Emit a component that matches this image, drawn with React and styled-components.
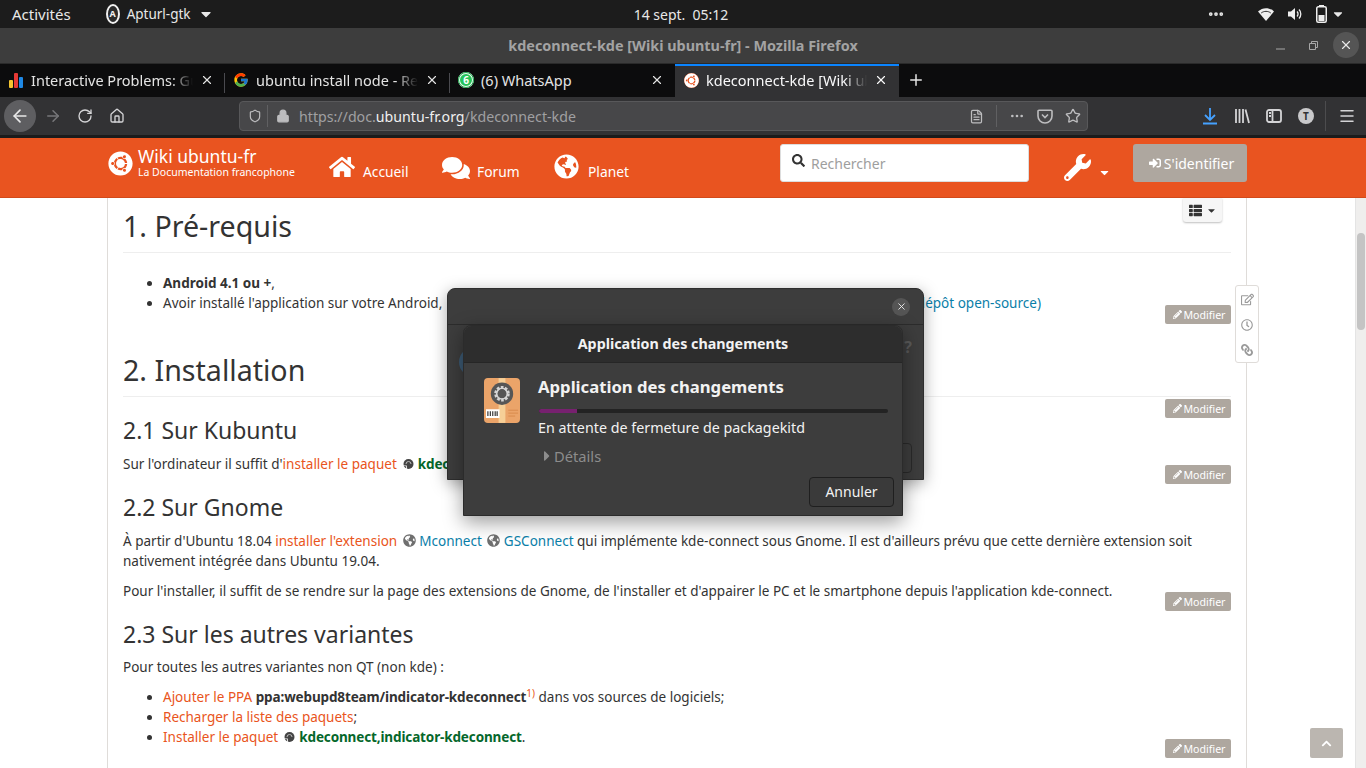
import React from "react";
import styled, { createGlobalStyle } from "styled-components";
import {
  FaHome, FaComments, FaGlobeAmericas, FaWrench, FaPencilAlt, FaSignInAlt, FaSearch,
  FaThList, FaRegEdit, FaRegClock, FaLink, FaChevronUp, FaUbuntu, FaCaretDown, FaCaretRight,
} from "react-icons/fa";
import { FcGoogle } from "react-icons/fc";
import {
  ArrowLeft, ArrowRight, RotateCw, Home, Lock, Shield, X, Plus, Star, Ellipsis,
  Menu, FileText,
} from "lucide-react";

const UI = `"Noto Sans", "Open Sans", sans-serif`;

const Global = createGlobalStyle`
  html, body { margin: 0; padding: 0; width: 1366px; height: 768px; overflow: hidden; background: #fff; }
  * { box-sizing: border-box; }
  body { font-family: ${UI}; }
`;

const Screen = styled.div`
  position: relative;
  width: 1366px;
  height: 768px;
  overflow: hidden;
  display: flex;
  flex-direction: column;
`;

/* ---------- GNOME top bar ---------- */
const TopBar = styled.div`
  height: 28px;
  flex: none;
  background: #1c1c1c;
  color: #e8e8e8;
  font-size: 13.5px;
  display: grid;
  grid-template-columns: 1fr auto 1fr;
  align-items: center;
  padding: 0 21px 0 12px;
`;
const TopLeft = styled.div`
  display: flex;
  align-items: center;
`;
const Activities = styled.span`
  font-size: 15px;
`;
const AppBadge = styled.span`
  width: 14px;
  height: 20px;
  margin-left: 35px;
  border-radius: 50%;
  background: #2a2a2a;
  border: 2px solid #f0f0f0;
  color: #f0f0f0;
  font-size: 9px;
  font-weight: 700;
  line-height: 16px;
  text-align: center;
  display: inline-block;
`;
const AppName = styled.span`
  margin-left: 7px;
`;
const TopRight = styled.div`
  display: flex;
  align-items: center;
  justify-content: flex-end;
  gap: 13px;
`;
const Clock = styled.div`
  white-space: pre;
  font-size: 14px;
  padding-left: 5px;
`;

/* ---------- window title ---------- */
const TitleBar = styled.div`
  height: 36px;
  flex: none;
  background: #3d3d3d;
  border-bottom: 1px solid #2a2a2a;
  position: relative;
  display: flex;
  align-items: center;
  justify-content: center;
  color: #a3a3a3;
  font-size: 14.4px;
  font-weight: 700;
`;
const WinControls = styled.div`
  position: absolute;
  right: 7px;
  top: 4px;
  display: flex;
  align-items: center;
  gap: 15px;
`;
const WinBtn = styled.span`
  width: 18px;
  height: 26px;
  display: flex;
  align-items: center;
  justify-content: center;
  color: #a8a8a8;
`;
const WinClose = styled.span`
  width: 26px;
  height: 26px;
  margin-left: -4px;
  border-radius: 50%;
  background: #555;
  color: #e8e8e8;
  display: flex;
  align-items: center;
  justify-content: center;
`;

/* ---------- tabs ---------- */
const TabStrip = styled.div`
  height: 33px;
  flex: none;
  background: #0c0c0d;
  display: flex;
  align-items: stretch;
`;
const Tab = styled.div`
  width: ${(p) => p.$w || 225}px;
  position: relative;
  display: flex;
  align-items: center;
  padding: 0 11px 3px 8px;
  gap: 7px;
  color: ${(p) => (p.$active ? "#f9f9fa" : "#e4e4e4")};
  background: ${(p) => (p.$active ? "#323234" : "transparent")};
  border-top: 2px solid ${(p) => (p.$active ? "#0a84ff" : "transparent")};
  font-size: 14.5px;
  &::after {
    content: "";
    display: ${(p) => (p.$sep ? "block" : "none")};
    position: absolute;
    right: 0;
    top: 7px;
    bottom: 4px;
    width: 1px;
    background: #4a4a4f;
  }
`;
const TabIcon = styled.span`
  width: 16px;
  height: 16px;
  flex: none;
  display: flex;
  align-items: center;
  justify-content: center;
`;
const TabLabel = styled.span`
  flex: 1;
  min-width: 0;
  overflow: hidden;
  white-space: nowrap;
  -webkit-mask-image: ${(p) => (p.$fade ? "linear-gradient(to right, #000 86%, transparent 100%)" : "none")};
  mask-image: ${(p) => (p.$fade ? "linear-gradient(to right, #000 86%, transparent 100%)" : "none")};
`;
const NewTab = styled.span`
  width: 34px;
  display: flex;
  align-items: center;
  justify-content: center;
  color: #e4e4e4;
  padding-bottom: 2px;
`;
const WaBadge = styled.span`
  width: 16px;
  height: 16px;
  border-radius: 50%;
  background: #25c35a;
  border: 2px solid #e8f8ee;
  outline: 1px solid #19a84a;
  outline-offset: -1px;
  color: #fff;
  font-size: 10px;
  font-weight: 700;
  line-height: 12px;
  text-align: center;
`;
const UbuBadge = styled.span`
  width: 15px;
  height: 15px;
  border-radius: 50%;
  background: #e95420;
  color: #fff;
  display: flex;
  align-items: center;
  justify-content: center;
`;

/* ---------- nav bar ---------- */
const NavBar = styled.div`
  height: 41px;
  flex: none;
  background: #323234;
  border-bottom: 3px solid #1b1b1b;
  display: flex;
  align-items: center;
  padding: 0 3px 0 4px;
  color: #d4d4d6;
`;
const BackBtn = styled.span`
  width: 32px;
  height: 32px;
  margin-right: 1px;
  border-radius: 50%;
  background: #5e5e61;
  color: #e8e8e8;
  display: flex;
  align-items: center;
  justify-content: center;
`;
const NavBtn = styled.span`
  width: 32px;
  height: 32px;
  display: flex;
  align-items: center;
  justify-content: center;
  color: ${(p) => (p.$dim ? "#77777a" : p.$blue ? "#45a1ff" : "#d4d4d6")};
`;
const UrlBar = styled.div`
  width: 849px;
  height: 30px;
  margin-left: 106px;
  margin-right: 106px;
  background: #474749;
  border: 1px solid #58585a;
  border-radius: 4px;
  display: flex;
  align-items: center;
  padding: 0 0 0 6px;
  color: #bdbdbf;
`;
const UrlSep = styled.span`
  width: 1px;
  height: 22px;
  background: #606062;
  margin: ${(p) => p.$m || "0 6px"};
`;
const UrlText = styled.div`
  flex: 1;
  margin-left: 9px;
  color: #a0a0a2;
  font-size: 14.2px;
  white-space: nowrap;
`;
const UrlHost = styled.span`
  color: #f0f0f0;
`;
const UrlIcon = styled.span`
  width: 28px;
  display: flex;
  align-items: center;
  justify-content: center;
`;
const Avatar = styled.span`
  width: 16px;
  height: 16px;
  border-radius: 50%;
  background: #c9c9cb;
  color: #323234;
  font-size: 10px;
  font-weight: 700;
  line-height: 16px;
  text-align: center;
`;
const BooksIcon = styled.svg`
  width: 16px;
  height: 16px;
  stroke: currentColor;
  fill: none;
  stroke-width: 1.8;
`;
const NavDivider = styled.span`
  width: 1px;
  height: 30px;
  background: #4c4c4e;
  margin: 0 5px 0 3px;
`;

/* ---------- site header ---------- */
const SiteHeader = styled.div`
  height: 60px;
  flex: none;
  background: #e95420;
  border-bottom: 1px solid #d24a1b;
  display: flex;
  color: #fff;
  padding-left: 108px;
  position: relative;
`;
const Brand = styled.div`
  display: flex;
  align-items: flex-start;
  gap: 5px;
  width: 221px;
  padding-top: 9px;
`;
const BrandLogo = styled.span`
  width: 25px;
  height: 25px;
  margin-top: 4px;
  font-size: 25px;
  line-height: 0;
`;
const BrandTitle = styled.div`
  font-size: 17.5px;
  line-height: 19px;
`;
const BrandSub = styled.div`
  font-size: 10.5px;
  line-height: 12px;
  white-space: nowrap;
`;
const SiteNav = styled.div`
  width: 451px;
  display: flex;
  align-items: flex-start;
  padding-top: 16px;
`;
const SiteLink = styled.div`
  width: ${(p) => p.$w}px;
  display: flex;
  align-items: flex-start;
  gap: ${(p) => p.$g}px;
  font-size: 13.8px;
  line-height: 20px;
  & > span { padding-top: 8px; }
`;
const SearchBox = styled.div`
  width: 249px;
  height: 38px;
  margin-top: 6px;
  background: #fff;
  border: 1px solid #ddd;
  border-radius: 3px;
  display: flex;
  align-items: center;
  gap: 6px;
  padding: 0 0 0 11px;
  color: #333;
  font-size: 14px;
  & > svg { margin-top: -6px; }
`;
const Placeholder = styled.span`
  color: #9e9e9e;
`;
const Tools = styled.div`
  width: 104px;
  padding: 16px 0 0 35px;
  display: flex;
  align-items: flex-start;
  gap: 7px;
`;
const LoginBtn = styled.div`
  width: 114px;
  height: 38px;
  margin-top: 6px;
  padding-left: 3px;
  background: #aea79f;
  border-radius: 3px;
  display: flex;
  align-items: center;
  justify-content: center;
  gap: 3px;
  font-size: 14px;
`;

/* ---------- page ---------- */
const PageArea = styled.div`
  flex: 1;
  min-height: 0;
  position: relative;
  display: flex;
  background: #fff;
  overflow: hidden;
`;
const Article = styled.div`
  width: 1140px;
  margin-left: 107px;
  padding: 0 15px;
  border-left: 1px solid #dfdcd9;
  border-right: 1px solid #dfdcd9;
  color: #333;
  font-size: 13.53px;
  line-height: 20px;
  position: relative;
`;
const H1 = styled.h1`
  margin: ${(p) => p.$top}px 0 0;
  font-size: 28.6px;
  line-height: 36px;
  font-weight: 400;
  padding-bottom: 8px;
  border-bottom: 1px solid #eee;
`;
const H2 = styled.h2`
  margin: ${(p) => p.$top}px 0 0;
  font-size: 23px;
  line-height: 30px;
  font-weight: 400;
`;
const P = styled.p`
  margin: ${(p) => p.$top}px 0 0;
`;
const List = styled.ul`
  margin: ${(p) => p.$top}px 0 0;
  padding: 0 0 0 40px;
`;
const Orange = styled.span`
  color: #e95420;
`;
const Blue = styled.span`
  color: #0a7ea8;
`;
const Green = styled.b`
  color: #05672b;
  font-weight: 700;
  letter-spacing: -0.14px;
`;
const Strong = styled.b`
  font-weight: 700;
  letter-spacing: -0.14px;
`;
const Sup = styled.sup`
  color: #e95420;
  font-size: 10px;
  line-height: 0;
`;
const Gap = styled.span`
  display: inline-block;
  width: ${(p) => p.$w}px;
`;
const InlineIcon = styled.span`
  display: inline-flex;
  vertical-align: -1px;
  margin: 0 ${(p) => p.$r ?? 5}px 0 ${(p) => p.$l ?? 3}px;
  color: #6f6f6f;
`;
const EditBtn = styled.div`
  position: absolute;
  right: 15px;
  top: ${(p) => p.$top}px;
  width: 66px;
  height: 19px;
  padding-left: 2px;
  background: #aea79f;
  border-radius: 2px;
  color: #fff;
  font-size: 10.6px;
  display: flex;
  align-items: center;
  justify-content: center;
  gap: 2px;
`;
const TocBtn = styled.div`
  position: absolute;
  top: 0;
  right: 24px;
  width: 39px;
  height: 24px;
  background: #f6f6f6;
  border-radius: 0 0 3px 3px;
  box-shadow: 0 1px 2px rgba(0, 0, 0, 0.25);
  color: #333;
  display: flex;
  align-items: center;
  justify-content: center;
  gap: 4px;
`;
const PageTools = styled.div`
  position: absolute;
  left: 1235px;
  top: 87px;
  width: 24px;
  height: 78px;
  background: #fff;
  border: 1px solid #dfdcd9;
  border-radius: 3px;
  display: flex;
  flex-direction: column;
  align-items: center;
  justify-content: space-around;
  color: #9a9a9a;
`;
const ChainIcon = styled(FaLink)`
  transform: scaleX(-1);
`;
const ToTop = styled.div`
  position: absolute;
  left: 1310px;
  top: 530px;
  width: 33px;
  height: 30px;
  background: #bbb6b0;
  border-radius: 2px;
  color: #fff;
  display: flex;
  align-items: center;
  justify-content: center;
`;
const Scrollbar = styled.div`
  position: absolute;
  right: 0;
  top: 0;
  bottom: 0;
  width: 11px;
  background: #efeeed;
  border-left: 1px solid #e4e4e4;
`;
const Thumb = styled.div`
  position: absolute;
  left: 1px;
  top: 35px;
  width: 8px;
  height: 97px;
  background: #c4c4c4;
  border-radius: 4px;
`;

/* ---------- dialogs (windows on the desktop) ---------- */
const BackDialog = styled.div`
  position: absolute;
  left: 447px;
  top: 288px;
  width: 477px;
  height: 192px;
  background: #3d3d3d;
  border-radius: 8px 8px 0 0;
  box-shadow: 0 4px 16px rgba(0, 0, 0, 0.35);
  border: 1px solid #2f2f2f;
`;
const BackHead = styled.div`
  height: 36px;
  border-bottom: 1px solid #2c2c2c;
  display: flex;
  justify-content: flex-end;
  align-items: center;
  padding-right: 13px;
`;
const BackClose = styled.span`
  width: 18px;
  height: 18px;
  border-radius: 50%;
  background: #555;
  color: #eee;
  display: flex;
  align-items: center;
  justify-content: center;
`;
const BackBubble = styled.span`
  position: absolute;
  left: 11px;
  top: 58px;
  width: 30px;
  height: 30px;
  border-radius: 50%;
  background: #3c5a74;
`;
const BackQ = styled.span`
  position: absolute;
  right: 11px;
  top: 47px;
  color: #5a5a5a;
  font-size: 16px;
  font-weight: 700;
`;
const BackBtnGhost = styled.span`
  position: absolute;
  right: 11px;
  top: 154px;
  width: 40px;
  height: 30px;
  border: 1px solid #2a2a2a;
  border-radius: 4px;
`;
const FrontDialog = styled.div`
  position: absolute;
  left: 463px;
  top: 325px;
  width: 440px;
  height: 191px;
  background: #3d3d3d;
  border-radius: 8px 8px 0 0;
  border: 1px solid #2b2b2b;
  box-shadow: 0 6px 20px rgba(0, 0, 0, 0.4);
  color: #f2f2f2;
  display: flex;
  flex-direction: column;
`;
const FrontHead = styled.div`
  height: 37px;
  flex: none;
  padding-bottom: 2px;
  background: #2d2d2d;
  border-bottom: 1px solid #262626;
  border-radius: 8px 8px 0 0;
  display: flex;
  align-items: center;
  justify-content: center;
  font-size: 14.3px;
  font-weight: 700;
`;
const FrontBody = styled.div`
  flex: 1;
  position: relative;
  display: flex;
  padding: 15px 14px 0 20px;
  gap: 18px;
`;
const FrontCol = styled.div`
  flex: 1;
`;
const FrontTitle = styled.div`
  font-size: 16.7px;
  font-weight: 700;
  line-height: 20px;
  margin-top: -1px;
`;
const Progress = styled.div`
  height: 4px;
  margin: 12px 0 0 1px;
  background: #232323;
  border-radius: 2px;
  overflow: hidden;
`;
const ProgressFill = styled.div`
  height: 100%;
  background: #77216f;
`;
const Status = styled.div`
  margin-top: 6px;
  font-size: 14.3px;
  line-height: 18px;
`;
const Details = styled.div`
  margin: 10px 0 0 1px;
  display: flex;
  align-items: center;
  gap: 0;
  font-size: 14.7px;
  line-height: 18px;
  color: #8c8c8c;
  & > svg { margin-right: -1px; }
`;
const CancelBtn = styled.div`
  position: absolute;
  right: 8px;
  bottom: 8px;
  width: 85px;
  height: 30px;
  padding-bottom: 2px;
  background: #3a3a3a;
  border: 1px solid #1f1f1f;
  border-radius: 4px;
  font-size: 14px;
  display: flex;
  align-items: center;
  justify-content: center;
`;

/* ---------- drawings ---------- */
const BarsIcon = () => (
  <svg width="16" height="16" viewBox="0 0 16 16">
    <rect x="1" y="8" width="4" height="8" rx="1" fill="#f4c430" />
    <rect x="6" y="1" width="4" height="15" rx="1" fill="#e53935" />
    <rect x="11" y="5" width="4" height="11" rx="1" fill="#1e88e5" />
  </svg>
);
const WifiIcon = () => (
  <svg width="16" height="14" viewBox="0 0 16 14">
    <path d="M0 4.5C4.5 0 11.5 0 16 4.5L8 14Z" fill="#eee" />
    <path d="M3.2 6C6 3.8 10 3.8 12.8 6" fill="none" stroke="#1c1c1c" strokeWidth=".9" />
  </svg>
);
const SpeakerIcon = () => (
  <svg width="16" height="16" viewBox="0 0 16 16" fill="none" stroke="#eee">
    <path d="M1 5.5h3L8 2v12L4 10.5H1z" fill="#eee" stroke="none" />
    <path d="M10 5.5a3.5 3.5 0 0 1 0 5M12 3.5a6.5 6.5 0 0 1 0 9" strokeWidth="1.3" />
  </svg>
);
const BatteryIcon = () => (
  <svg width="11" height="18" viewBox="0 0 11 18"><rect x="3" y="0" width="5" height="2" fill="#eee" /><rect x=".75" y="1.75" width="9.5" height="15.5" rx="1.5" fill="none" stroke="#eee" strokeWidth="1.5" /><rect x="2.5" y="10" width="6" height="6" fill="#eee" /></svg>
);
const DownloadIcon = () => (
  <svg width="18" height="18" viewBox="0 0 18 18" fill="none" stroke="currentColor" strokeWidth="1.8">
    <path d="M9 1v11M4 8l5 5 5-5M2 16.5h14" />
  </svg>
);
const AptIcon = () => (
  <InlineIcon $l={2.5} $r={4}>
    <svg width="11" height="11" viewBox="0 0 11 11"><circle cx="5.5" cy="5" r="5" fill="#444" /><path d="M3 5a2.5 2.5 0 0 1 5 0" fill="none" stroke="#bbb" strokeWidth="1" /><path d="M0 6.5h3.8v4.5L2.6 9.8 1.2 11z" fill="#fff" /><path d="M.8 7.3h2v2z" fill="#111" /></svg>
  </InlineIcon>
);
const Globe = () => (
  <InlineIcon $l={2} $r={3.5}>
    <FaGlobeAmericas size={13} />
  </InlineIcon>
);
const PackageIcon = () => (
  <svg width="36" height="45" viewBox="0 0 37 46" style={{ flex: "none" }}>
    <rect width="37" height="46" rx="4" fill="#eba469" />
    <rect x="15" width="7" height="46" fill="#f6cf97" />
    <circle cx="18.5" cy="16" r="11.5" fill="#565656" />
    <circle cx="18.5" cy="16" r="6.5" fill="none" stroke="#d5d5d5" strokeWidth="3" strokeDasharray="2.6 1.5" />
    <circle cx="18.5" cy="16" r="5.5" fill="none" stroke="#d5d5d5" strokeWidth="1.6" />
    <rect x="2" y="32" width="14" height="9" fill="#fff" />
    <path d="M4 34v5M6.5 34v5M9 34v5M11.5 34v5M13.5 34v5" stroke="#333" strokeWidth="1.2" />
    <path d="M25 33h10M25 36h10M25 39h7" stroke="#d98b4d" strokeWidth="1" />
  </svg>
);

export default function App() {
  return (
    <Screen>
      <Global />
      <TopBar>
        <TopLeft>
          <Activities>Activités</Activities>
          <AppBadge>A</AppBadge>
          <AppName>Apturl-gtk</AppName>
          <FaCaretDown size={16} style={{ marginLeft: 7 }} />
        </TopLeft>
        <Clock>14 sept.  05:12</Clock>
        <TopRight>
          <Ellipsis size={18} strokeWidth={3} style={{ marginRight: 20 }} />
          <WifiIcon />
          <SpeakerIcon />
          <BatteryIcon />
          <FaCaretDown size={14} style={{ marginLeft: -9 }} />
        </TopRight>
      </TopBar>

      <TitleBar>
        kdeconnect-kde [Wiki ubuntu-fr] - Mozilla Firefox
        <WinControls>
          <WinBtn>
            <svg width="9" height="9" viewBox="0 0 9 9"><path d="M0 8h9" stroke="#a8a8a8" /></svg>
          </WinBtn>
          <WinBtn>
            <svg width="9" height="9" viewBox="0 0 9 9"><path d="M.5 2.5h6v6h-6zM2.5 2V.5h6v6H7" stroke="#a8a8a8" fill="none" /></svg>
          </WinBtn>
          <WinClose><X size={14} /></WinClose>
        </WinControls>
      </TitleBar>

      <TabStrip>
        <Tab $sep>
          <TabIcon><BarsIcon /></TabIcon>
          <TabLabel $fade>Interactive Problems: Guided</TabLabel>
          <X size={14} />
        </Tab>
        <Tab $sep>
          <TabIcon><FcGoogle size={16} /></TabIcon>
          <TabLabel $fade>ubuntu install node - Recherche</TabLabel>
          <X size={14} />
        </Tab>
        <Tab>
          <TabIcon><WaBadge>6</WaBadge></TabIcon>
          <TabLabel>(6) WhatsApp</TabLabel>
          <X size={14} />
        </Tab>
        <Tab $active $w={224}>
          <TabIcon><UbuBadge><FaUbuntu size={15} /></UbuBadge></TabIcon>
          <TabLabel $fade>kdeconnect-kde [Wiki ubuntu-fr]</TabLabel>
          <X size={14} />
        </Tab>
        <NewTab><Plus size={18} /></NewTab>
      </TabStrip>

      <NavBar>
        <BackBtn><ArrowLeft size={20} /></BackBtn>
        <NavBtn $dim><ArrowRight size={18} /></NavBtn>
        <NavBtn><RotateCw size={16} /></NavBtn>
        <NavBtn><Home size={16} /></NavBtn>
        <UrlBar>
          <Shield size={14} style={{ marginLeft: 2 }} />
          <UrlSep $m="0 8px 0 5px" />
          <Lock size={14} fill="currentColor" />
          <UrlText>https://doc.<UrlHost>ubuntu-fr.org</UrlHost>/kdeconnect-kde</UrlText>
          <UrlIcon><FileText size={15} /></UrlIcon>
          <UrlSep $m="0 6px" />
          <UrlIcon><Ellipsis size={16} /></UrlIcon>
          <UrlIcon>
            <svg width="16" height="16" viewBox="0 0 16 16" fill="none" stroke="currentColor" strokeWidth="1.6"><path d="M2 2.2h12a1 1 0 0 1 1 1V8a7 7 0 0 1-14 0V3.2a1 1 0 0 1 1-1z" /><path d="M5 6.5l3 3 3-3" /></svg>
          </UrlIcon>
          <UrlIcon><Star size={16} /></UrlIcon>
        </UrlBar>
        <NavBtn $blue><DownloadIcon /></NavBtn>
        <NavBtn>
          <BooksIcon viewBox="0 0 16 16"><path d="M2 1v14M5.5 1v14M9 1v14M11.5 1.5L15 15" /></BooksIcon>
        </NavBtn>
        <NavBtn>
          <BooksIcon viewBox="0 0 16 16"><rect x="1" y="2" width="14" height="12" rx="2" /><path d="M6.5 2v12M3 5h2M3 8h2" /></BooksIcon>
        </NavBtn>
        <NavBtn><Avatar>T</Avatar></NavBtn>
        <NavDivider />
        <NavBtn><Menu size={18} /></NavBtn>
      </NavBar>

      <SiteHeader>
        <Brand>
          <BrandLogo><FaUbuntu /></BrandLogo>
          <div>
            <BrandTitle>Wiki ubuntu-fr</BrandTitle>
            <BrandSub>La Documentation francophone</BrandSub>
          </div>
        </Brand>
        <SiteNav>
          <SiteLink $w={113} $g={8}><FaHome size={26} /><span>Accueil</span></SiteLink>
          <SiteLink $w={112} $g={7}><FaComments size={28} /><span>Forum</span></SiteLink>
          <SiteLink $w={110} $g={9}><FaGlobeAmericas size={25} /><span>Planet</span></SiteLink>
        </SiteNav>
        <SearchBox>
          <FaSearch size={13} />
          <Placeholder>Rechercher</Placeholder>
        </SearchBox>
        <Tools>
          <FaWrench size={27} />
          <FaCaretDown size={13} style={{ marginTop: 12 }} />
        </Tools>
        <LoginBtn><FaSignInAlt size={12} />S'identifier</LoginBtn>
      </SiteHeader>

      <PageArea>
        <Article>
          <H1 $top={10}>1. Pré-requis</H1>
          <List $top={20}>
            <li><b>Android 4.1 ou +</b>,</li>
            <li>Avoir installé l'application sur votre Android, <Gap $w={471} /><Blue>dépôt open-source)</Blue></li>
          </List>
          <H1 $top={39}>2. Installation</H1>
          <H2 $top={18}>2.1 Sur Kubuntu</H2>
          <P $top={9}>Sur l'ordinateur il suffit d'<Orange>installer le paquet</Orange> <AptIcon /><Green>kdeconnect</Green></P>
          <H2 $top={18}>2.2 Sur Gnome</H2>
          <P $top={9}>À partir d'Ubuntu 18.04 <Orange>installer l'extension</Orange> <Globe /><Blue>Mconnect</Blue> <Globe /><Blue>GSConnect</Blue> qui implémente kde-connect sous Gnome. Il est d'ailleurs prévu que cette dernière extension soit nativement intégrée dans Ubuntu 19.04.</P>
          <P $top={10}>Pour l'installer, il suffit de se rendre sur la page des extensions de Gnome, de l'installer et d'appairer le PC et le smartphone depuis l'application kde-connect.</P>
          <H2 $top={18}>2.3 Sur les autres variantes</H2>
          <P $top={8}>Pour toutes les autres variantes non QT (non kde) :</P>
          <List $top={10}>
            <li><Orange>Ajouter le PPA</Orange> <Strong>ppa:webupd8team/indicator-kdeconnect</Strong><Sup>1)</Sup> dans vos sources de logiciels;</li>
            <li><Orange>Recharger la liste des paquets</Orange>;</li>
            <li><Orange>Installer le paquet</Orange> <AptIcon /><Green>kdeconnect,indicator-kdeconnect</Green>.</li>
          </List>
          <TocBtn><FaThList size={13} /><FaCaretDown size={11} /></TocBtn>
          <EditBtn $top={107}><FaPencilAlt size={9} />Modifier</EditBtn>
          <EditBtn $top={201}><FaPencilAlt size={9} />Modifier</EditBtn>
          <EditBtn $top={267}><FaPencilAlt size={9} />Modifier</EditBtn>
          <EditBtn $top={394}><FaPencilAlt size={9} />Modifier</EditBtn>
          <EditBtn $top={541}><FaPencilAlt size={9} />Modifier</EditBtn>
        </Article>
        <PageTools>
          <FaRegEdit size={13} />
          <FaRegClock size={12} />
          <ChainIcon size={12} />
        </PageTools>
        <ToTop><FaChevronUp size={11} /></ToTop>
        <Scrollbar><Thumb /></Scrollbar>
      </PageArea>

      <BackDialog>
        <BackHead><BackClose><X size={11} /></BackClose></BackHead>
        <BackBubble />
        <BackQ>?</BackQ>
        <BackBtnGhost />
      </BackDialog>
      <FrontDialog>
        <FrontHead>Application des changements</FrontHead>
        <FrontBody>
          <PackageIcon />
          <FrontCol>
            <FrontTitle>Application des changements</FrontTitle>
            <Progress><ProgressFill style={{ width: "11%" }} /></Progress>
            <Status>En attente de fermeture de packagekitd</Status>
            <Details><FaCaretRight size={16} />Détails</Details>
          </FrontCol>
          <CancelBtn>Annuler</CancelBtn>
        </FrontBody>
      </FrontDialog>
    </Screen>
  );
}
